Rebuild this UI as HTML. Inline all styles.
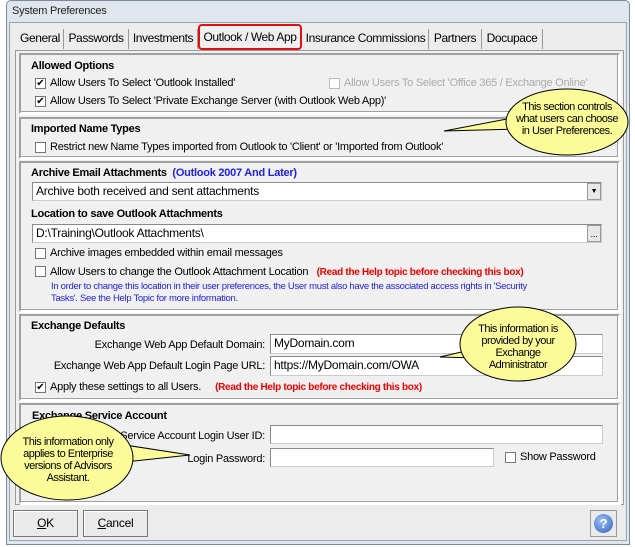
<!DOCTYPE html>
<html><head><style>
*{box-sizing:border-box;margin:0;padding:0}
body{width:635px;height:547px;background:#fff;font-family:"Liberation Sans",Arial,sans-serif;font-size:11px;letter-spacing:-0.25px;color:#000;position:relative;overflow:hidden}
.a{position:absolute;white-space:nowrap}
.win{position:absolute;left:6px;top:0;width:624px;height:545px;border:1px solid #7a8a99;border-radius:5px 5px 0 0;background:#dfe6ee}
.inner{position:absolute;left:9px;top:22px;width:618px;height:519px;background:#ececec;border:1px solid #9aa4ad}
.panel{position:absolute;left:15px;top:50px;width:609px;height:455px;border:1px solid #9a9a9a;background:#f0f0f0}
.box{position:absolute;left:19px;width:601px;border:2px solid #a0a0a0;border-right-color:#fff;border-bottom-color:#fff;box-shadow:inset -1px -1px 0 #a0a0a0,1px 1px 0 #fff}
.b{font-weight:bold}
.cb{position:absolute;width:11px;height:11px;border:1px solid #777;background:#fff;font-size:10px;line-height:9px;text-align:center;letter-spacing:0}
.inp{position:absolute;background:#fff;border:1px solid #8a8a8a;border-right-color:#ccc;border-bottom-color:#ccc;padding-left:3px;font-size:12px;line-height:17px}
.tab{position:absolute;top:29px;height:20px;font-size:12px;line-height:19px;border-right:1px solid #999;text-align:center;letter-spacing:-0.4px}
.btn{position:absolute;top:510px;height:27px;border:1px solid #777;background:#eaeaea;font-size:12px;line-height:25px;text-align:center;box-shadow:inset 1px 1px 0 #fff}
.red{color:#e00;font-weight:bold;font-size:10px;letter-spacing:-0.3px}
.blue{color:#2222dd}
.r{text-align:right}
</style></head><body>
<div class="win"></div>
<div class="a" style="left:12px;top:5px;font-size:11px;color:#222">System Preferences</div>
<div class="inner"></div>
<div class="panel"></div>
<div class="tab" style="left:17px;width:47px">General</div>
<div class="tab" style="left:64px;width:65px">Passwords</div>
<div class="tab" style="left:129px;width:69px">Investments</div>
<div class="a" style="left:198px;top:24px;width:104px;height:26px;border:2px solid #e01010;border-radius:4px;background:#f0f0f0;font-size:12px;line-height:22px;text-align:center;letter-spacing:-0.4px">Outlook / Web App</div>
<div class="tab" style="left:303px;width:126px">Insurance Commissions</div>
<div class="tab" style="left:429px;width:53px">Partners</div>
<div class="tab" style="left:482px;width:61px">Docupace</div>

<div class="box" style="top:53px;height:61px"></div>
<div class="a b" style="left:31px;top:60px">Allowed Options</div>
<div class="cb" style="left:35px;top:78px">✔</div><div class="a" style="left:50px;top:77px">Allow Users To Select 'Outlook Installed'</div>
<div class="cb" style="left:329px;top:78px;border-color:#bbb"></div><div class="a" style="left:344px;top:77px;color:#aaa">Allow Users To Select 'Office 365 / Exchange Online'</div>
<div class="cb" style="left:35px;top:96px">✔</div><div class="a" style="left:50px;top:95px">Allow Users To Select 'Private Exchange Server (with Outlook Web App)'</div>

<div class="box" style="top:117px;height:42px"></div>
<div class="a b" style="left:31px;top:123px">Imported Name Types</div>
<div class="cb" style="left:35px;top:142px"></div><div class="a" style="left:50px;top:141px">Restrict new Name Types imported from Outlook to 'Client' or 'Imported from Outlook'</div>

<div class="box" style="top:161px;height:151px"></div>
<div class="a b" style="left:31px;top:167px">Archive Email Attachments <span class="blue">&nbsp;(Outlook 2007 And Later)</span></div>
<div class="inp" style="left:32px;top:182px;width:570px;height:19px">Archive both received and sent attachments</div>
<div class="a" style="left:587px;top:183px;width:14px;height:17px;background:#e8e8e8;border:1px solid #999;font-size:7px;line-height:15px;text-align:center">▼</div>
<div class="a b" style="left:31px;top:208px">Location to save Outlook Attachments</div>
<div class="inp" style="left:32px;top:224px;width:570px;height:19px">D:\Training\Outlook Attachments\</div>
<div class="a" style="left:587px;top:225px;width:14px;height:17px;background:#e8e8e8;border:1px solid #999;font-size:9px;line-height:17px;text-align:center">...</div>
<div class="cb" style="left:35px;top:248px"></div><div class="a" style="left:50px;top:247px">Archive images embedded within email messages</div>
<div class="cb" style="left:35px;top:266px"></div><div class="a" style="left:50px;top:266px">Allow Users to change the Outlook Attachment Location &nbsp;&nbsp;<span class="red">(Read the Help topic before checking this box)</span></div>
<div class="a blue" style="left:51px;top:281px;font-size:9.5px;line-height:12px;letter-spacing:-0.3px">In order to change this location in their user preferences, the User must also have the associated access rights in 'Security<br>Tasks'. See the Help Topic for more information.</div>

<div class="box" style="top:314px;height:87px"></div>
<div class="a b" style="left:31px;top:320px">Exchange Defaults</div>
<div class="a r" style="left:30px;width:235px;top:339px">Exchange Web App Default Domain:</div>
<div class="inp" style="left:270px;top:334px;width:333px;height:20px">MyDomain.com</div>
<div class="a r" style="left:30px;width:235px;top:360px">Exchange Web App Default Login Page URL:</div>
<div class="inp" style="left:270px;top:356px;width:333px;height:20px">https://MyDomain.com/OWA</div>
<div class="cb" style="left:35px;top:382px">✔</div><div class="a" style="left:50px;top:381px">Apply these settings to all Users. &nbsp;&nbsp;&nbsp;&nbsp;<span class="red">(Read the Help topic before checking this box)</span></div>

<div class="box" style="top:403px;height:101px"></div>
<div class="a b" style="left:32px;top:410px">Exchange Service Account</div>
<div class="a r" style="left:30px;width:235px;top:430px">Exchange Service Account Login User ID:</div>
<div class="inp" style="left:270px;top:425px;width:333px;height:19px"></div>
<div class="a r" style="left:30px;width:235px;top:453px">Login Password:</div>
<div class="inp" style="left:270px;top:448px;width:224px;height:19px"></div>
<div class="cb" style="left:505px;top:452px"></div><div class="a" style="left:520px;top:451px">Show Password</div>

<div class="btn" style="left:13px;width:65px"><u>O</u>K</div>
<div class="btn" style="left:83px;width:65px"><u>C</u>ancel</div>
<div class="a" style="left:590px;top:510px;width:27px;height:27px;border:1px solid #999;background:#eaeaea"></div>
<div class="a" style="left:594px;top:514px;width:19px;height:19px;border-radius:50%;background:radial-gradient(circle at 40% 35%,#9cc0f0,#2e5fc0);color:#fff;font-weight:bold;font-size:13px;line-height:19px;text-align:center">?</div>

<svg class="a" style="left:0;top:0" width="635" height="547">
<g fill="#fbfb9a" stroke="#000" stroke-width="1">
<path d="M512,118 L444,131 L520,129 Z"/>
<ellipse cx="567" cy="122" rx="61" ry="33"/>
<path d="M470,350 L440,357 L478,358 Z"/>
<ellipse cx="518" cy="344" rx="58" ry="37"/>
<path d="M125,445 L190,455 L125,462 Z"/>
<ellipse cx="67" cy="458" rx="66" ry="42"/>
</g>
<g fill="#fbfb9a"><path d="M514,119 L519,128 L524,120Z"/><path d="M474,351 L478,357 L482,351Z"/><path d="M130,447 L130,460 L124,455Z"/></g>
<g font-family="Liberation Sans,Arial,sans-serif" font-size="11" letter-spacing="-0.5" text-anchor="middle">
<text x="567" y="110">This section controls</text><text x="567" y="122">what users can choose</text><text x="567" y="134">in User Preferences.</text>
<text x="518" y="332">This information is</text><text x="518" y="344">provided by your</text><text x="518" y="356">Exchange</text><text x="518" y="368">Administrator</text>
<text x="68" y="445">This information only</text><text x="68" y="457">applies to Enterprise</text><text x="68" y="469">versions of Advisors</text><text x="68" y="481">Assistant.</text>
</g>
</svg>
</body></html>
